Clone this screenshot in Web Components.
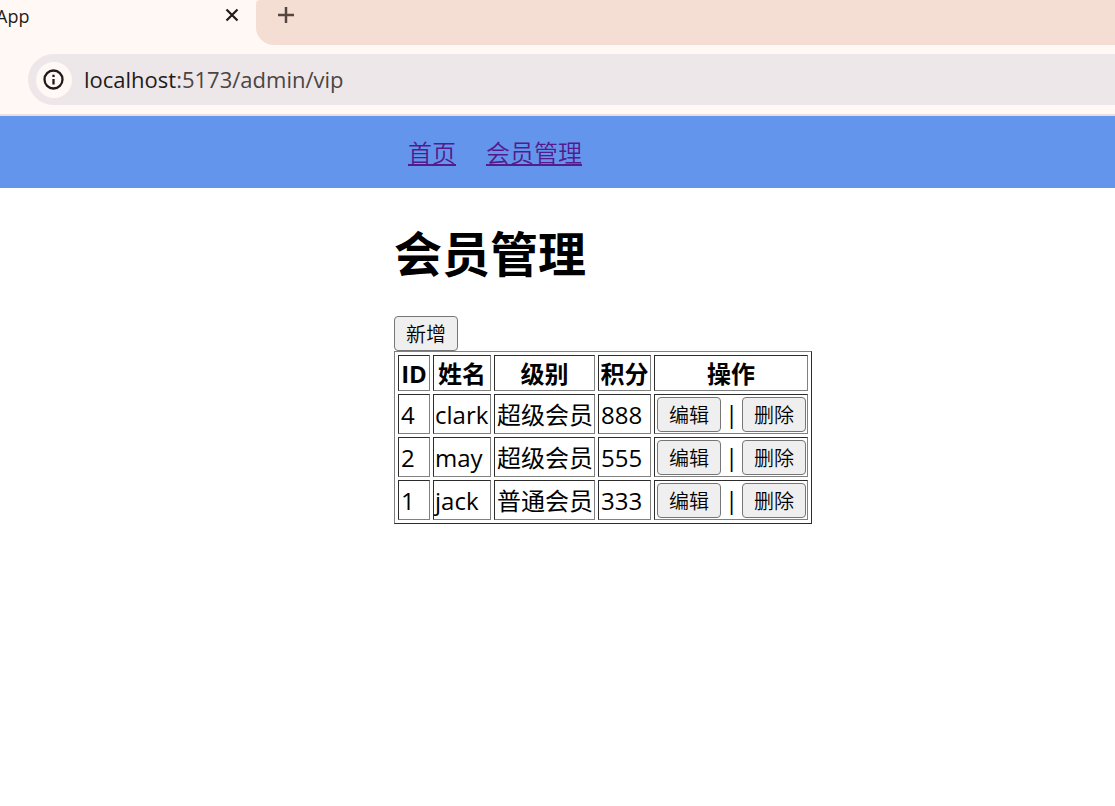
<!DOCTYPE html>
<html lang="zh-CN">
<head>
<meta charset="utf-8">
<meta name="viewport" content="width=device-width, initial-scale=1">
<title>Vite App</title>
<style>
body { margin: 0; background: #fff; color: #000; font-family: "Open Sans", "Noto Sans CJK SC", sans-serif; font-size: 24px; line-height: 32px; }
</style>
</head>
<body>
<browser-frame address-host="localhost" address-path=":5173/admin/vip">
  <span slot="tab">App</span>
</browser-frame>
<site-nav>
  <nav-link href="/">首页</nav-link>
  <nav-link href="/admin/vip">会员管理</nav-link>
</site-nav>
<vip-page></vip-page>
<script>
class BaseElement extends HTMLElement {
  render(html) {
    const t = document.createElement('template');
    t.innerHTML = html;
    this.attachShadow({ mode: 'open' }).append(t.content.cloneNode(true));
  }
}

customElements.define('browser-frame', class extends BaseElement {
  connectedCallback() {
    this.render(`
      <style>
        :host { display: block; background: #fff8f5; border-bottom: 2px solid #e8e0e0; overflow: hidden; }
        .tabs { display: flex; height: 45px; }
        .tab { box-sizing: border-box; width: 260px; margin-left: -4px; display: flex; justify-content: space-between; align-items: flex-start; padding-right: 16px; font-size: 18px; color: #1f1b19; }
        .tab button { margin-top: 7px; }
        .strip { flex: 1; background: #f4ddd3; border-radius: 4px 0 0 18px; padding: 7px 0 0 22px; }
        button { display: block; border: 0; padding: 0; background: none; width: 16px; height: 16px; }
        svg { display: block; }
        form { display: flex; align-items: center; gap: 12px; height: 51px; margin: 9px 0 9px 28px; padding-left: 8px; border-radius: 26px 0 0 26px; background: #ede7e9; }
        .info { width: 36px; height: 36px; border-radius: 50%; background: #fff8f5; display: flex; align-items: center; justify-content: center; }
        .url { flex: 1; font-size: 22px; line-height: 30px; padding-bottom: 2px; color: #4b4543; white-space: nowrap; }
        b { font-weight: 400; color: #1f1b19; }
      </style>
      <div class="tabs">
        <div class="tab"><slot name="tab"></slot>
          <button aria-label="关闭"><svg width="16" height="16" viewBox="0 0 16 16"><path d="M2.5 2.5L13.5 13.5M13.5 2.5L2.5 13.5" stroke="#1f1b19" stroke-width="2.2"/></svg></button>
        </div>
        <div class="strip"><button aria-label="新标签页"><svg width="16" height="16" viewBox="0 0 16 16"><path d="M8 0V16M0 8H16" stroke="#554540" stroke-width="2.5"/></svg></button></div>
      </div>
      <form>
        <button type="button" class="info" aria-label="网站信息"><svg width="22" height="22" viewBox="0 0 22 22"><circle cx="10.5" cy="10.5" r="9" fill="none" stroke="#1f1b19" stroke-width="2.3"/><path d="M10.5 10V15.5M10.5 5.8V8" stroke="#1f1b19" stroke-width="2.3"/></svg></button>
        <div class="url" role="textbox" aria-label="地址"><b></b><span></span></div>
      </form>`);
    this.shadowRoot.querySelector('b').textContent = this.getAttribute('address-host');
    this.shadowRoot.querySelector('.url span').textContent = this.getAttribute('address-path');
  }
});

customElements.define('site-nav', class extends BaseElement {
  connectedCallback() {
    this.render(`
      <style>
        :host { display: block; background: #6495ed; }
        nav { display: flex; align-items: center; gap: 30px; box-sizing: border-box; height: 72px; padding: 2px 0 0 408px; }
      </style>
      <nav><slot></slot></nav>`);
  }
});

customElements.define('nav-link', class extends BaseElement {
  connectedCallback() {
    this.render(`
      <style>
        :host { display: block; }
        a { color: #551a8b; font-weight: 350; text-decoration: underline; text-decoration-thickness: 2px; text-underline-offset: 2px; }
      </style>
      <a><slot></slot></a>`);
    this.shadowRoot.querySelector('a').href = this.getAttribute('href');
  }
});

customElements.define('plain-button', class extends BaseElement {
  connectedCallback() {
    this.render(`
      <style>
        :host { display: block; }
        button { display: block; box-sizing: border-box; width: 64px; height: 35px; padding: 2px 0 0; border: 1px solid #767676; border-radius: 4px; background: #efefef; color: #000; font: 350 20px/31px "Open Sans", "Noto Sans CJK SC", sans-serif; }
      </style>
      <button type="button"><slot></slot></button>`);
  }
});

customElements.define('vip-table', class extends BaseElement {
  set rows(list) {
    this.shadowRoot.querySelector('tbody').innerHTML = list.map(([id, name, level, points]) => `
      <tr><td>${id}</td><td class="latin">${name}</td><td>${level}</td><td>${points}</td>
      <td class="tools"><div class="actions"><plain-button>编辑</plain-button><span>|</span><plain-button>删除</plain-button></div></td></tr>`).join('');
  }
  constructor() {
    super();
    this.render(`
      <style>
        :host { display: block; }
        table { table-layout: fixed; width: 418px; border: 1px solid; border-color: #808080 #2c2c2c #2c2c2c #808080; border-collapse: separate; border-spacing: 3px; }
        th, td { box-sizing: border-box; height: 40px; padding: 2px 0 0 2px; border: 1px solid; border-color: #2c2c2c #808080 #808080 #2c2c2c; white-space: nowrap; font-size: 24px; line-height: 32px; }
        th { height: 36px; font-weight: 700; text-align: center; padding: 2px 0 0; }
        td { font-weight: 400; }
        .latin { padding-left: 1px; }
        .tools { padding: 0 1px 0 2px; }
        .id { width: 32px; } .name { width: 58px; } .level { width: 101px; } .points { width: 53px; }
        .actions { display: flex; align-items: center; justify-content: space-between; color: #000; }
      </style>
      <table>
        <colgroup><col class="id"><col class="name"><col class="level"><col class="points"><col></colgroup>
        <thead><tr><th>ID</th><th>姓名</th><th>级别</th><th>积分</th><th>操作</th></tr></thead>
        <tbody></tbody>
      </table>`);
  }
});

customElements.define('vip-page', class extends BaseElement {
  connectedCallback() {
    this.render(`
      <style>
        :host { display: block; padding: 34px 0 32px 394px; }
        h1 { margin: 0 0 30px; font-size: 48px; line-height: 64px; font-weight: 700; }
      </style>
      <main><h1>会员管理</h1><plain-button>新增</plain-button><vip-table></vip-table></main>`);
    this.shadowRoot.querySelector('vip-table').rows = [
      [4, 'clark', '超级会员', 888],
      [2, 'may', '超级会员', 555],
      [1, 'jack', '普通会员', 333]
    ];
  }
});
</script>
</body>
</html>
